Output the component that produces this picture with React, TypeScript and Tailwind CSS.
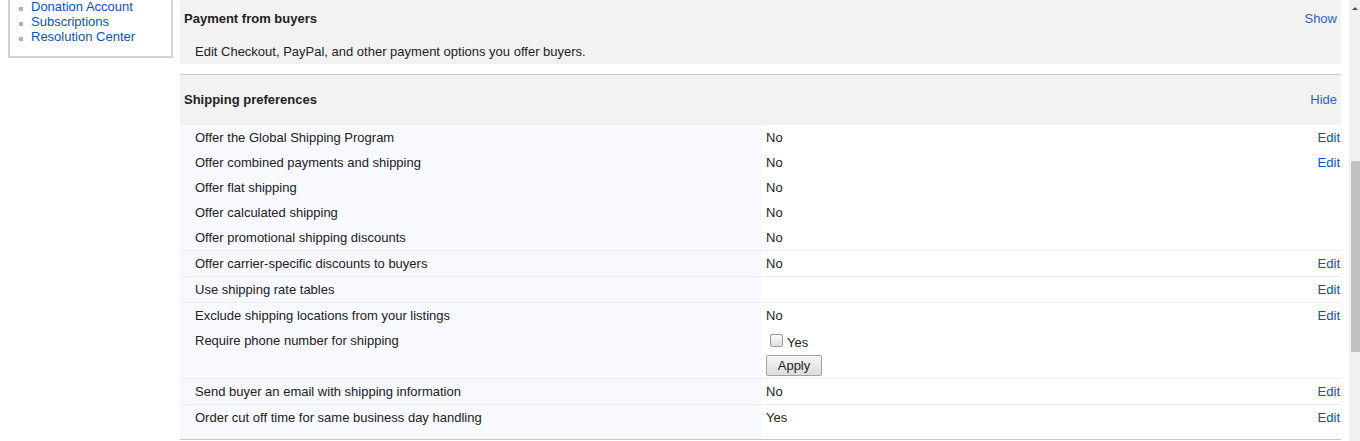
import React from 'react';

type Row = {
  label: string;
  value?: string;
  edit?: boolean;
  phone?: boolean;
};

// rows grouped the way the page draws its light dividers
const groups: Row[][] = [
  [
    { label: 'Offer the Global Shipping Program', value: 'No', edit: true },
    { label: 'Offer combined payments and shipping', value: 'No', edit: true },
    { label: 'Offer flat shipping', value: 'No' },
    { label: 'Offer calculated shipping', value: 'No' },
    { label: 'Offer promotional shipping discounts', value: 'No' },
  ],
  [{ label: 'Offer carrier-specific discounts to buyers', value: 'No', edit: true }],
  [{ label: 'Use shipping rate tables', edit: true }],
  [
    { label: 'Exclude shipping locations from your listings', value: 'No', edit: true },
    { label: 'Require phone number for shipping', phone: true },
  ],
  [{ label: 'Send buyer an email with shipping information', value: 'No', edit: true }],
  [{ label: 'Order cut off time for same business day handling', value: 'Yes', edit: true }],
];

const sideLinks = ['Donation Account', 'Subscriptions', 'Resolution Center'];

function PrefRow({ row, last }: { row: Row; last: boolean }) {
  return (
    <div className="flex">
      <div className={`w-[581px] shrink-0 bg-[#f8f8ff] pl-[15px] pt-[5px] ${last ? 'pb-[14px]' : 'pb-[5px]'}`}>
        {row.label}
      </div>
      <div className="flex flex-1 justify-between pl-[5px] pr-[1px] pt-[5px]">
        {row.phone ? (
          <div className="flex flex-col items-start pt-[1px] pb-[2px]">
            <label className="flex items-start">
              <span className="ml-[4px] mr-[4px] h-[13px] w-[13px] rounded-[2px] border border-[#9a9a9a] bg-linear-to-b from-[#fdfdfd] to-[#dedede]" />
              <span className="mt-[1px]">Yes</span>
            </label>
            <button className="mt-[5px] h-[21px] w-[56px] rounded-[2px] border border-[#a3a3a3] bg-linear-to-b from-[#f7f7f7] to-[#dcdcdc] text-[13px] leading-[15px] text-[#222]">
              Apply
            </button>
          </div>
        ) : (
          <span>{row.value}</span>
        )}
        {row.edit && <a className="cursor-pointer text-[#0654ba]">Edit</a>}
      </div>
    </div>
  );
}

export default function App() {
  return (
    <div
      className="flex h-[441px] overflow-hidden bg-white text-[13px] leading-[15px] text-[#222]"
      style={{ fontFamily: '"Liberation Sans", Arial, sans-serif' }}
    >
      {/* Left nav box (top scrolled out of view) */}
      <div className="w-[180px] shrink-0 pl-[8px]">
        <div className="w-[165px] border-x-2 border-b-2 border-[#d2d2d2] pb-[12px] pl-[9px]">
          <ul className="-mt-[1px]">
            {sideLinks.map((l) => (
              <li key={l} className="flex items-end">
                <span className="mb-[3px] mr-[8px] h-[4px] w-[4px] bg-[#b3b3b3]" />
                <a className="cursor-pointer text-[#0654ba]">{l}</a>
              </li>
            ))}
          </ul>
        </div>
      </div>

      {/* Main settings column */}
      <div className="w-[1161px] shrink-0">
        {/* Payment from buyers */}
        <div className="bg-[#f2f2f2] pb-[5px] pt-[11px]">
          <div className="flex justify-between pl-[4px] pr-[4px]">
            <span className="font-bold">Payment from buyers</span>
            <a className="cursor-pointer text-[#3062c8]">Show</a>
          </div>
          <div className="mt-[18px] pl-[15px]">Edit Checkout, PayPal, and other payment options you offer buyers.</div>
        </div>

        {/* Shipping preferences */}
        <div className="mt-[10px] border-t border-[#c8c8c8]">
          <div className="flex justify-between bg-[#f2f2f2] pb-[18px] pl-[4px] pr-[4px] pt-[17px]">
            <span className="font-bold">Shipping preferences</span>
            <a className="cursor-pointer text-[#3062c8]">Hide</a>
          </div>
          <div className="border-b border-[#c8c8c8]">
            {groups.map((g, gi) => (
              <div key={gi} className={gi > 0 ? 'border-t border-[#eeeeee]' : ''}>
                {g.map((row, ri) => (
                  <PrefRow key={row.label} row={row} last={gi === groups.length - 1 && ri === g.length - 1} />
                ))}
              </div>
            ))}
          </div>
        </div>
      </div>

      <div className="w-[8px] shrink-0" />

      {/* Browser scrollbar */}
      <div className="flex w-[11px] shrink-0 flex-col bg-[#f1f1f1]">
        <svg width="11" height="14" viewBox="0 0 11 14" className="shrink-0">
          <path d="M3 10 L6 7 L9 10 Z" fill="#505050" />
        </svg>
        <div className="ml-[2px] mt-[147px] h-[191px] w-[9px] bg-[#c1c1c1]" />
      </div>
    </div>
  );
}
